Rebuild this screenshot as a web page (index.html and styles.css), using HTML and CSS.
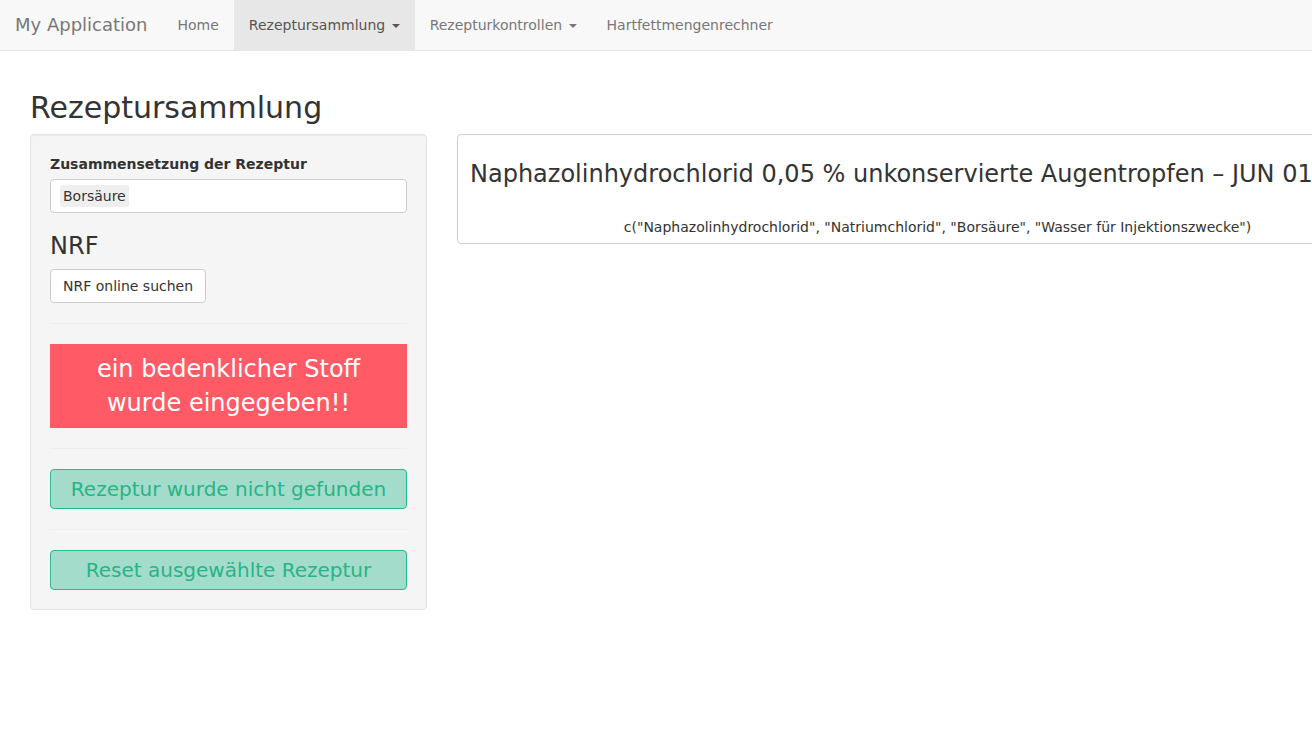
FILE: index.html
```html
<!DOCTYPE html>
<html>
<head>
<meta charset="utf-8">
<link rel="stylesheet" href="styles.css">
</head>
<body>
<nav class="navbar">
  <span class="brand">My Application</span>
  <ul class="nav">
    <li><a>Home</a></li>
    <li class="active"><a>Rezeptursammlung <span class="caret"></span></a></li>
    <li><a>Rezepturkontrollen <span class="caret"></span></a></li>
    <li><a>Hartfettmengenrechner</a></li>
  </ul>
</nav>
<div class="page">
  <h2 class="title">Rezeptursammlung</h2>
  <div class="row">
    <div class="sidebar">
      <div class="well">
        <label class="label">Zusammensetzung der Rezeptur</label>
        <div class="select"><span class="item">Borsäure</span></div>
        <h3 class="h3">NRF</h3>
        <button class="btn">NRF online suchen</button>
        <hr class="hr">
        <div class="alert">ein bedenklicher Stoff<br>wurde eingegeben!!</div>
        <hr class="hr">
        <button class="btn-green">Rezeptur wurde nicht gefunden</button>
        <hr class="hr">
        <button class="btn-green">Reset ausgewählte Rezeptur</button>
      </div>
    </div>
    <div class="main">
      <div class="box">
        <div class="box-title">Naphazolinhydrochlorid 0,05 % unkonservierte Augentropfen – JUN 01</div>
        <div class="box-sub">c("Naphazolinhydrochlorid", "Natriumchlorid", "Borsäure", "Wasser für Injektionszwecke")</div>
      </div>
    </div>
  </div>
</div>
</body>
</html>
```
FILE: styles.css
```css
* { box-sizing: border-box; }
html, body { margin: 0; padding: 0; overflow: hidden; }
body {
  font-family: "DejaVu Sans", sans-serif;
  font-size: 14px;
  line-height: 20px;
  color: #333;
  background: #fff;
  width: 1312px;
}
.navbar {
  height: 51px;
  background: #f8f8f8;
  border-bottom: 1px solid #e7e7e7;
  display: flex;
  align-items: stretch;
  margin-bottom: 20px;
}
.brand {
  font-size: 18px;
  line-height: 20px;
  padding: 15px 15px;
  color: #777;
  height: 50px;
}
.nav {
  list-style: none;
  margin: 0;
  padding: 0;
  display: flex;
}
.nav li a {
  display: block;
  padding: 15px 15px;
  line-height: 20px;
  height: 50px;
  color: #777;
  white-space: nowrap;
}
.nav li.active a {
  background: #e7e7e7;
  color: #555;
}
.caret {
  display: inline-block;
  width: 0;
  height: 0;
  margin-left: 2px;
  vertical-align: middle;
  border-top: 4px solid;
  border-left: 4px solid transparent;
  border-right: 4px solid transparent;
}
.page {
  display: flow-root;
  padding: 0 30px;
}
.title {
  font-size: 30px;
  font-weight: 500;
  line-height: 33px;
  margin: 20px 0 10px;
  color: #333;
}
.row {
  display: flex;
  gap: 30px;
}
.sidebar {
  width: 397px;
  flex: none;
}
.well {
  background: #f5f5f5;
  border: 1px solid #e3e3e3;
  border-radius: 4px;
  padding: 19px;
  box-shadow: inset 0 1px 1px rgba(0,0,0,.05);
  display: flex;
  flex-direction: column;
  align-items: flex-start;
}
.label {
  font-weight: bold;
  margin-bottom: 5px;
  display: block;
}
.select {
  width: 100%;
  height: 34px;
  background: #fff;
  border: 1px solid #ccc;
  border-radius: 4px;
  padding: 5px 9px;
  display: flex;
  align-items: center;
}
.item {
  background: #efefef;
  border-radius: 3px;
  padding: 1px 3px;
  line-height: 20px;
  color: #333;
}
.h3 {
  font-size: 24px;
  font-weight: 500;
  line-height: 26px;
  margin: 20px 0 10px;
}
.btn {
  font-family: inherit;
  font-size: 14px;
  line-height: 20px;
  height: 34px;
  padding: 6px 12px;
  background: #fff;
  border: 1px solid #ccc;
  border-radius: 4px;
  color: #333;
}
.hr {
  width: 100%;
  border: 0;
  border-top: 1px solid #eee;
  margin: 20px 0;
}
.alert {
  width: 100%;
  background: #ff5a65;
  color: #fff;
  text-align: center;
  font-size: 24px;
  line-height: 34px;
  padding: 8px 10px;
}
.btn-green {
  width: 100%;
  height: 40px;
  font-family: inherit;
  font-size: 20px;
  line-height: 26px;
  padding: 6px 12px;
  background: #a3dcca;
  border: 1px solid #2bb88b;
  border-radius: 4px;
  color: #27b587;
}
.main {
  flex: none;
}
.box {
  width: 961px;
  border: 1px solid #ccc;
  border-radius: 4px;
  padding: 26px 12px 6px;
}
.box-title {
  font-size: 24px;
  line-height: 26px;
  white-space: nowrap;
  margin-bottom: 30px;
}
.box-sub {
  text-align: center;
  white-space: nowrap;
}
```
